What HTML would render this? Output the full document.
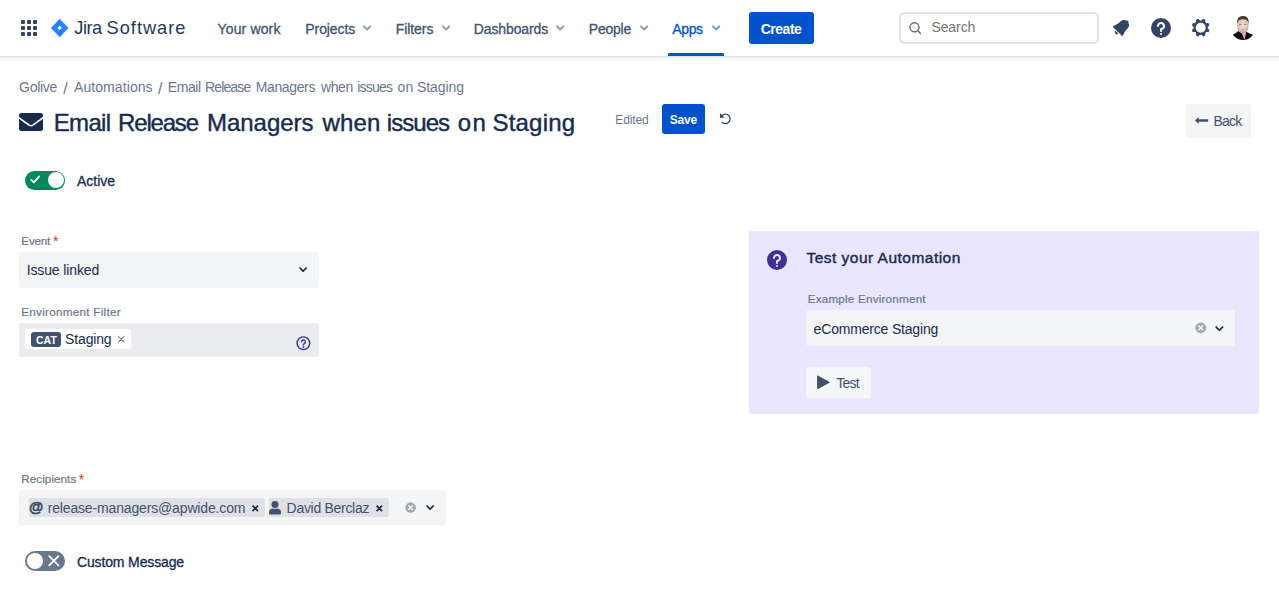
<!DOCTYPE html>
<html lang="en"><head><meta charset="utf-8"><title>Email Release Managers when issues on Staging - Jira</title>
<style>
html,body{margin:0;padding:0;background:#fff;overflow:hidden}
body{width:1279px;height:589px;position:relative;font-family:"Liberation Sans",sans-serif;color:#172b4d}
.t{position:absolute;white-space:pre;line-height:1;font-family:"Liberation Sans",sans-serif}
.b{position:absolute;box-sizing:border-box}
svg{position:absolute;overflow:visible}
.g{margin:0;padding:0;border:0;font-size:0;line-height:0;height:0;display:block;font-weight:normal}

</style></head>
<body>
<!-- header -->
<div class="b" style="left:0;top:0;width:1279px;height:56px;background:#fff"></div>
<div class="b" style="left:0;top:56px;width:1279px;height:4px;background:linear-gradient(180deg,rgba(9,30,66,0.13) 0,rgba(9,30,66,0.13) 1px,rgba(9,30,66,0.08) 1px,rgba(9,30,66,0) 4px)"></div>
<!-- app switcher -->
<svg style="left:17px;top:16px" width="24" height="24" viewBox="0 0 24 24" fill="#344563">
<rect x="4" y="4" width="4" height="4" rx="1"/><rect x="10" y="4" width="4" height="4" rx="1"/><rect x="16" y="4" width="4" height="4" rx="1"/>
<rect x="4" y="10" width="4" height="4" rx="1"/><rect x="10" y="10" width="4" height="4" rx="1"/><rect x="16" y="10" width="4" height="4" rx="1"/>
<rect x="4" y="16" width="4" height="4" rx="1"/><rect x="10" y="16" width="4" height="4" rx="1"/><rect x="16" y="16" width="4" height="4" rx="1"/>
</svg>
<!-- jira diamond -->
<svg style="left:50px;top:18px" width="20" height="20" viewBox="0 0 20 20">
<defs><linearGradient id="jg1" x1="0.75" y1="0.15" x2="0.4" y2="0.75"><stop offset="0" stop-color="#0052cc"/><stop offset="1" stop-color="#2684ff"/></linearGradient>
<linearGradient id="jg2" x1="0.25" y1="0.85" x2="0.6" y2="0.25"><stop offset="0" stop-color="#0052cc"/><stop offset="1" stop-color="#2684ff"/></linearGradient></defs>
<path d="M9.2 1.4 Q9.7 0.9 10.2 1.4 L18.1 9.5 Q18.5 10 18.1 10.5 L10.2 18.6 Q9.7 19.1 9.2 18.6 L1.3 10.5 Q0.9 10 1.3 9.5 Z M9.7 7.6 L7.5 9.95 L9.7 12.3 L11.9 9.95 Z" fill="#2684ff" fill-rule="evenodd"/>
<path d="M9.7 0.95 L9.7 7.6 L7.5 9.95 Q5.6 5.5 9.7 0.95 Z" fill="url(#jg1)" opacity="0.55"/>
<path d="M9.7 19.05 L9.7 12.3 L11.9 9.95 Q13.8 14.5 9.7 19.05 Z" fill="url(#jg2)" opacity="0.55"/>
</svg>
<!-- nav chevrons -->
<svg style="left:363.0px;top:25.4px" width="8.2" height="5.95" viewBox="8 9.6 8 5.8"><path d="M8.292 10.293a1.009 1.009 0 000 1.419l2.939 2.965c.218.215.5.322.779.322s.556-.107.769-.322l2.93-2.955a1.01 1.01 0 000-1.419.987.987 0 00-1.406 0l-2.298 2.317-2.307-2.327a.99.99 0 00-1.406 0z" fill="#42526e" opacity="0.55"/></svg>
<svg style="left:441.5px;top:25.4px" width="8.2" height="5.95" viewBox="8 9.6 8 5.8"><path d="M8.292 10.293a1.009 1.009 0 000 1.419l2.939 2.965c.218.215.5.322.779.322s.556-.107.769-.322l2.93-2.955a1.01 1.01 0 000-1.419.987.987 0 00-1.406 0l-2.298 2.317-2.307-2.327a.99.99 0 00-1.406 0z" fill="#42526e" opacity="0.55"/></svg>
<svg style="left:555.9px;top:25.4px" width="8.2" height="5.95" viewBox="8 9.6 8 5.8"><path d="M8.292 10.293a1.009 1.009 0 000 1.419l2.939 2.965c.218.215.5.322.779.322s.556-.107.769-.322l2.93-2.955a1.01 1.01 0 000-1.419.987.987 0 00-1.406 0l-2.298 2.317-2.307-2.327a.99.99 0 00-1.406 0z" fill="#42526e" opacity="0.55"/></svg>
<svg style="left:639.9px;top:25.4px" width="8.2" height="5.95" viewBox="8 9.6 8 5.8"><path d="M8.292 10.293a1.009 1.009 0 000 1.419l2.939 2.965c.218.215.5.322.779.322s.556-.107.769-.322l2.93-2.955a1.01 1.01 0 000-1.419.987.987 0 00-1.406 0l-2.298 2.317-2.307-2.327a.99.99 0 00-1.406 0z" fill="#42526e" opacity="0.55"/></svg>
<svg style="left:711.9px;top:25.4px" width="8.2" height="5.95" viewBox="8 9.6 8 5.8"><path d="M8.292 10.293a1.009 1.009 0 000 1.419l2.939 2.965c.218.215.5.322.779.322s.556-.107.769-.322l2.93-2.955a1.01 1.01 0 000-1.419.987.987 0 00-1.406 0l-2.298 2.317-2.307-2.327a.99.99 0 00-1.406 0z" fill="#0052cc" opacity="0.55"/></svg>
<!-- apps underline -->
<div class="b" style="left:668px;top:53px;width:56px;height:3px;background:#0052cc;border-radius:1px 1px 0 0"></div>
<!-- create -->
<div class="b" style="left:749px;top:12px;width:65px;height:32px;background:#0052cc;border-radius:3px"></div>
<!-- search -->
<div class="b" style="left:899.3px;top:12px;width:199.5px;height:32.2px;border:2px solid #dfe1e6;border-radius:5.5px;background:#fff"></div>
<svg style="left:909px;top:22px" width="13" height="13" viewBox="0 0 13 13" fill="none" stroke="#5e6c84" stroke-width="1.4" stroke-linecap="round"><circle cx="5.5" cy="5.35" r="4.55"/><path d="M8.9 8.8 L11.5 11.4"/></svg>
<!-- bell -->
<svg style="left:1109px;top:16px" width="24" height="24" viewBox="0 0 24 24"><path d="M6.485 17.669a2 2 0 002.829 0l-2.829-2.83a2 2 0 000 2.83zm4.897-12.191l-.725.725c-.782.782-2.21 1.813-3.206 2.311l-3.017 1.509c-.495.248-.584.774-.187 1.171l8.556 8.556c.398.396.922.313 1.171-.188l1.51-3.016c.494-.988 1.526-2.42 2.311-3.206l.725-.726a5.048 5.048 0 00.64-6.356 1.01 1.01 0 10-1.354-1.494c-.023.025-.046.049-.066.075a5.043 5.043 0 00-2.788-.84 5.036 5.036 0 00-3.57 1.478z" fill="#344563" fill-rule="evenodd"/></svg>
<!-- help -->
<svg style="left:1149px;top:16px" width="24" height="24" viewBox="0 0 24 24"><circle fill="#344563" cx="12" cy="12" r="10"/><circle fill="#fff" cx="12" cy="18" r="1"/><path d="M15.89 9.05a3.975 3.975 0 00-2.957-2.942C10.321 5.514 8.017 7.446 8 9.95l.005.147a.992.992 0 00.982.904c.552 0 1-.447 1.002-.998a2.004 2.004 0 014.007-.002c0 1.102-.898 2-2.003 2H12a1 1 0 00-1 .987v2.014a1.001 1.001 0 002.004 0v-.782c0-.217.145-.399.35-.472A3.99 3.99 0 0015.89 9.05" fill="#fff"/></svg>
<!-- gear -->
<svg style="left:1188.85px;top:15.85px" width="24" height="24" viewBox="0 0 24 24"><path d="M11.701 16.7a5.002 5.002 0 110-10.003 5.002 5.002 0 010 10.004m8.368-3.117a1.995 1.995 0 01-1.346-1.885c0-.876.563-1.613 1.345-1.885a.48.48 0 00.315-.574 8.947 8.947 0 00-.836-1.993.477.477 0 00-.598-.195 2.04 2.04 0 01-1.29.08 1.988 1.988 0 01-1.404-1.395 2.04 2.04 0 01.076-1.297.478.478 0 00-.196-.597 8.98 8.98 0 00-1.975-.826.479.479 0 00-.574.314 1.995 1.995 0 01-1.885 1.346 1.994 1.994 0 01-1.884-1.345.482.482 0 00-.575-.315c-.708.2-1.379.485-2.004.842a.47.47 0 00-.198.582A2.002 2.002 0 014.445 7.06a.478.478 0 00-.595.196 8.946 8.946 0 00-.833 1.994.48.48 0 00.308.572 1.995 1.995 0 011.323 1.877c0 .867-.552 1.599-1.324 1.877a.479.479 0 00-.308.57 8.99 8.99 0 00.723 1.79.477.477 0 00.624.194c.595-.273 1.343-.264 2.104.238.117.077.225.185.302.3.527.8.512 1.58.198 2.188a.473.473 0 00.168.628 8.946 8.946 0 002.11.897.474.474 0 00.57-.313 1.995 1.995 0 011.886-1.353c.878 0 1.618.567 1.887 1.353a.475.475 0 00.57.313 8.964 8.964 0 002.084-.883.473.473 0 00.167-.631c-.318-.608-.337-1.393.191-2.195.077-.116.185-.225.302-.302.772-.511 1.527-.513 2.125-.23a.477.477 0 00.628-.19 8.925 8.925 0 00.728-1.793.478.478 0 00-.314-.573" fill="#344563" fill-rule="evenodd"/></svg>
<!-- avatar -->
<svg style="left:1231px;top:16px" width="24" height="24" viewBox="0 0 24 24"><defs><clipPath id="av"><circle cx="12" cy="12" r="12"/></clipPath>
<radialGradient id="fc" cx="0.5" cy="0.55" r="0.6"><stop offset="0" stop-color="#f0ddd4"/><stop offset="0.6" stop-color="#e3c6b9"/><stop offset="1" stop-color="#b48d7c"/></radialGradient></defs>
<g clip-path="url(#av)"><rect width="24" height="24" fill="#fff"/>
<path d="M2.2 18.6 C4 17.6 5.8 16.6 7.2 15 L11 17.5 L15.3 15.8 C17 17 19.5 17.8 21.6 18.6 L24 24 H0 Z" fill="#0c0c0e"/>
<path d="M9 14 L15.2 14 L15.2 17 L13.4 24 L11.4 18.5 Z" fill="#d9b3a3"/>
<rect x="6.3" y="0" width="11.2" height="16.6" rx="5.2" ry="6" fill="url(#fc)"/>
<path d="M6.1 7.5 C5.6 2 8.5 -0.3 12 -0.3 S18.2 2 17.6 7.5 C17.1 4.6 15.6 3.3 12 3.3 S6.7 4.6 6.1 7.5Z" fill="#4b3c35"/>
<ellipse cx="9.3" cy="8.4" rx="1.3" ry="0.6" fill="#6b5148" opacity="0.6"/><ellipse cx="14.3" cy="8.4" rx="1.3" ry="0.6" fill="#6b5148" opacity="0.6"/>
<ellipse cx="11.8" cy="13.7" rx="1.7" ry="0.7" fill="#c98f8a" opacity="0.8"/>
<path d="M7 12.5 Q11.8 19 16.8 12.5 Q15 16.8 11.8 16.8 T7 12.5Z" fill="#a88576" opacity="0.45"/>
</g></svg>
<!-- title mail icon -->
<svg style="left:19.1px;top:113.2px" width="24" height="18" viewBox="0 64 512 384"><path d="M502.3 190.8c3.9-3.1 9.7-.2 9.7 4.7V400c0 26.5-21.5 48-48 48H48c-26.5 0-48-21.5-48-48V195.6c0-5 5.7-7.8 9.7-4.7 22.4 17.4 52.1 39.5 154.1 113.6 21.1 15.4 56.7 47.8 92.2 47.6 35.7.3 72-32.8 92.3-47.6 102-74.1 131.6-96.3 154-113.7zM256 320c23.2.4 56.6-29.2 73.4-41.4 132.7-96.3 142.8-104.7 173.4-128.7 5.8-4.5 9.2-11.5 9.2-18.9v-19c0-26.5-21.5-48-48-48H48C21.5 64 0 85.5 0 112v19c0 7.4 3.4 14.3 9.2 18.9 30.6 23.9 40.7 32.4 173.4 128.7 16.8 12.2 50.2 41.8 73.4 41.4z" fill="#172b4d"/></svg>
<!-- save -->
<div class="b" style="left:662px;top:104px;width:43px;height:30px;background:#0052cc;border-radius:3px"></div>
<!-- undo icon -->
<svg style="left:719px;top:112px" width="13" height="13" viewBox="0 0 13 13"><path d="M3.0 3.5 A4.75 4.75 0 1 1 3.0 10.2" fill="none" stroke="#344563" stroke-width="1.25" stroke-linecap="round"/><path d="M0.95 1.1 L0.95 5.75 L5.7 5.75 Z" fill="#344563"/></svg>
<!-- back -->
<div class="b" style="left:1186px;top:104px;width:65px;height:34px;background:#f4f5f7;border-radius:3px"></div>
<svg style="left:1195px;top:117.4px" width="13.2" height="7" viewBox="0 0 13.2 7"><path d="M0 3.5 L3.7 0 V2.3 H13.2 V4.7 H3.7 V7 Z" fill="#42526e"/></svg>

<!-- active toggle -->
<div class="b" style="left:25px;top:170.6px;width:40px;height:19.4px;background:#00875a;border-radius:10px"></div>
<div class="b" style="left:47.5px;top:172.3px;width:16px;height:16px;background:#fff;border-radius:50%"></div>
<svg style="left:30.3px;top:175.3px" width="10.5" height="9" viewBox="0 0 10.5 9" fill="none" stroke="#fff" stroke-width="1.8" stroke-linecap="round" stroke-linejoin="round"><path d="M1.2 4.8 L3.8 7.4 L9.3 1.4"/></svg>

<!-- Event select -->
<div class="b" style="left:19.3px;top:252px;width:299.7px;height:35.5px;background:#f4f5f7;border-radius:3px"></div>
<svg style="left:299.2px;top:267.4px" width="8.2" height="5.2" viewBox="0 0 8.2 5.2" fill="none" stroke="#172b4d" stroke-width="1.7" stroke-linecap="round" stroke-linejoin="round"><path d="M1 1 L4.1 4.1 L7.2 1"/></svg>
<!-- Env filter -->
<div class="b" style="left:19.4px;top:323.2px;width:299.6px;height:33.6px;background:#ebecf0;border-radius:3px"></div>
<div class="b" style="left:25px;top:329.4px;width:105.8px;height:19.5px;background:#fff;border-radius:3px"></div>
<div class="b" style="left:31.2px;top:332.2px;width:29.9px;height:14.7px;background:#42526e;border-radius:3px"></div>
<svg style="left:118.3px;top:335.8px" width="6.5" height="6.5" viewBox="0 0 7 7" stroke="#6b778c" stroke-width="1.2" stroke-linecap="round"><path d="M0.6 0.6 L6.4 6.4 M6.4 0.6 L0.6 6.4"/></svg>
<svg style="left:295.5px;top:336px" width="15" height="15" viewBox="0 0 15 15"><circle cx="7.4" cy="7.2" r="6.3" fill="none" stroke="#403294" stroke-width="1.4"/><path d="M5.5 5.9 A1.95 1.95 0 1 1 8.2 7.7 Q7.4 8.1 7.4 8.9" fill="none" stroke="#403294" stroke-width="1.4" stroke-linecap="round"/><circle cx="7.4" cy="10.9" r="0.9" fill="#403294"/></svg>

<!-- Test panel -->
<div class="b" style="left:749.3px;top:231.2px;width:509.5px;height:182.8px;background:#eae6ff;border-radius:3px"></div>
<svg style="left:765.4px;top:247.6px" width="24" height="24" viewBox="0 0 24 24"><circle fill="#403294" cx="12" cy="12" r="10"/><circle fill="#eae6ff" cx="12" cy="18" r="1"/><path d="M15.89 9.05a3.975 3.975 0 00-2.957-2.942C10.321 5.514 8.017 7.446 8 9.95l.005.147a.992.992 0 00.982.904c.552 0 1-.447 1.002-.998a2.004 2.004 0 014.007-.002c0 1.102-.898 2-2.003 2H12a1 1 0 00-1 .987v2.014a1.001 1.001 0 002.004 0v-.782c0-.217.145-.399.35-.472A3.99 3.99 0 0015.89 9.05" fill="#eae6ff"/></svg>
<div class="b" style="left:805.5px;top:310.4px;width:429.6px;height:35.4px;background:#f4f5f7;border-radius:3px"></div>
<svg style="left:1194.8px;top:322.4px" width="11.6" height="11.6" viewBox="0 0 12 12"><circle cx="6" cy="6" r="5.6" fill="#a0a8b6"/><path d="M4 4 L8 8 M8 4 L4 8" stroke="#f4f5f7" stroke-width="1.5" stroke-linecap="round"/></svg>
<svg style="left:1215.2px;top:326px" width="8.8" height="5.4" viewBox="0 0 8.2 5.2" fill="none" stroke="#172b4d" stroke-width="1.7" stroke-linecap="round" stroke-linejoin="round"><path d="M1 1 L4.1 4.1 L7.2 1"/></svg>
<div class="b" style="left:805.5px;top:366.5px;width:65.9px;height:31.8px;background:#f5f6f8;border-radius:3.5px"></div>
<svg style="left:817px;top:375.4px" width="13" height="14.6" viewBox="0 0 13 14.6"><path d="M0.6 0.9 L12.4 7.3 L0.6 13.7 Z" fill="#42526e" stroke="#42526e" stroke-width="1" stroke-linejoin="round"/></svg>

<!-- Recipients -->
<div class="b" style="left:19.2px;top:490px;width:426.7px;height:35.3px;background:#f4f5f7;border-radius:3px"></div>
<div class="b" style="left:29.1px;top:498px;width:235.5px;height:18.8px;background:#dfe1e6;border-radius:1px 3px 3px 1px"></div>
<div class="b" style="left:268.8px;top:498px;width:120px;height:18.8px;background:#dfe1e6;border-radius:1px 3px 3px 1px"></div>
<svg style="left:269.3px;top:501.4px" width="12" height="13.6" viewBox="0 0 12 13.6" fill="#42526e"><circle cx="6" cy="3.5" r="3.5"/><path d="M0 12.3 V11.3 A3.6 3.6 0 0 1 3.6 7.7 H8.4 A3.6 3.6 0 0 1 12 11.3 V12.3 A1.3 1.3 0 0 1 10.7 13.6 H1.3 A1.3 1.3 0 0 1 0 12.3 Z"/></svg>
<svg style="left:251.6px;top:504.5px" width="6.6" height="6.6" viewBox="0 0 7 7" stroke="#172b4d" stroke-width="1.8" stroke-linecap="butt"><path d="M0.6 0.6 L6.4 6.4 M6.4 0.6 L0.6 6.4"/></svg>
<svg style="left:375.5px;top:504.5px" width="6.6" height="6.6" viewBox="0 0 7 7" stroke="#172b4d" stroke-width="1.8" stroke-linecap="butt"><path d="M0.6 0.6 L6.4 6.4 M6.4 0.6 L0.6 6.4"/></svg>
<svg style="left:405.1px;top:502.1px" width="11.2" height="11.2" viewBox="0 0 12 12"><circle cx="6" cy="6" r="5.6" fill="#a0a8b6"/><path d="M4 4 L8 8 M8 4 L4 8" stroke="#f4f5f7" stroke-width="1.5" stroke-linecap="round"/></svg>
<svg style="left:426.2px;top:505px" width="8.2" height="5.2" viewBox="0 0 8.2 5.2" fill="none" stroke="#172b4d" stroke-width="1.7" stroke-linecap="round" stroke-linejoin="round"><path d="M1 1 L4.1 4.1 L7.2 1"/></svg>

<!-- custom message toggle -->
<div class="b" style="left:25px;top:551.4px;width:39.6px;height:19.4px;background:#6b778c;border-radius:10px"></div>
<div class="b" style="left:26.8px;top:553.1px;width:16px;height:16px;background:#fff;border-radius:50%"></div>
<svg style="left:47.5px;top:555.3px" width="11.6" height="11.6" viewBox="0 0 11.6 11.6" stroke="#fff" stroke-width="1.8" stroke-linecap="round"><path d="M1.2 1.2 L10.4 10.4 M10.4 1.2 L1.2 10.4"/></svg>

<div class="g"><span class="t" style="left:74.25px;top:19px;font-size:18.2px;font-weight:400;color:#253858;letter-spacing:-0.447px;">Jira</span> <span class="t" style="left:106.55px;top:19px;font-size:18.2px;font-weight:400;color:#253858;letter-spacing:1.016px;">Software</span></div>
<nav class="g"><span class="t" style="left:217.62px;top:22px;font-size:14px;font-weight:400;color:#42526e;letter-spacing:0.129px;-webkit-text-stroke:0.3px #42526e;">Your work</span> <span class="t" style="left:305.35px;top:22px;font-size:14px;font-weight:400;color:#42526e;letter-spacing:-0.095px;-webkit-text-stroke:0.3px #42526e;">Projects</span> <span class="t" style="left:395.65px;top:22px;font-size:14px;font-weight:400;color:#42526e;letter-spacing:-0.061px;-webkit-text-stroke:0.3px #42526e;">Filters</span> <span class="t" style="left:473.85px;top:22px;font-size:14px;font-weight:400;color:#42526e;letter-spacing:-0.129px;-webkit-text-stroke:0.3px #42526e;">Dashboards</span> <span class="t" style="left:588.85px;top:22px;font-size:14px;font-weight:400;color:#42526e;letter-spacing:-0.248px;-webkit-text-stroke:0.3px #42526e;">People</span> <span class="t" style="left:672.35px;top:22px;font-size:14px;font-weight:400;color:#0052cc;letter-spacing:-0.388px;-webkit-text-stroke:0.3px #0052cc;">Apps</span></nav>
<span class="t" style="left:760.72px;top:22px;font-size:14px;font-weight:700;color:#ffffff;letter-spacing:-0.491px;">Create</span>
<span class="t" style="left:931.42px;top:20px;font-size:14px;font-weight:400;color:#757575;letter-spacing:-0.078px;">Search</span>
<div class="g"><span class="t" style="left:19.09px;top:80px;font-size:14px;font-weight:400;color:#6b778c;letter-spacing:-0.303px;">Golive</span> <span class="t" style="left:63.31px;top:81px;font-size:16px;font-weight:400;color:#6b778c;letter-spacing:0.000px;">/</span> <span class="t" style="left:74.02px;top:80px;font-size:14px;font-weight:400;color:#6b778c;letter-spacing:0.077px;">Automations</span> <span class="t" style="left:158.01px;top:81px;font-size:16px;font-weight:400;color:#6b778c;letter-spacing:0.000px;">/</span> <span class="t" style="left:167.71px;top:80px;font-size:14px;font-weight:400;color:#6b778c;letter-spacing:-0.396px;">Email</span> <span class="t" style="left:204.91px;top:80px;font-size:14px;font-weight:400;color:#6b778c;letter-spacing:-0.832px;">Release</span> <span class="t" style="left:255.71px;top:80px;font-size:14px;font-weight:400;color:#6b778c;letter-spacing:-0.365px;">Managers</span> <span class="t" style="left:321.01px;top:80px;font-size:14px;font-weight:400;color:#6b778c;letter-spacing:-0.430px;">when</span> <span class="t" style="left:357.15px;top:80px;font-size:14px;font-weight:400;color:#6b778c;letter-spacing:-0.772px;">issues</span> <span class="t" style="left:397.62px;top:80px;font-size:14px;font-weight:400;color:#6b778c;letter-spacing:0.205px;">on</span> <span class="t" style="left:417.11px;top:80px;font-size:14px;font-weight:400;color:#6b778c;letter-spacing:-0.110px;">Staging</span></div>
<h1 class="g"><span class="t" style="left:53.81px;top:111px;font-size:24px;font-weight:400;color:#172b4d;letter-spacing:-0.691px;-webkit-text-stroke:0.4px #172b4d;">Email</span> <span class="t" style="left:118.11px;top:111px;font-size:24px;font-weight:400;color:#172b4d;letter-spacing:-1.198px;-webkit-text-stroke:0.4px #172b4d;">Release</span> <span class="t" style="left:206.90px;top:111px;font-size:24px;font-weight:400;color:#172b4d;letter-spacing:-0.001px;-webkit-text-stroke:0.4px #172b4d;">Managers</span> <span class="t" style="left:322.39px;top:111px;font-size:24px;font-weight:400;color:#172b4d;letter-spacing:0.217px;-webkit-text-stroke:0.4px #172b4d;">when</span> <span class="t" style="left:386.80px;top:111px;font-size:24px;font-weight:400;color:#172b4d;letter-spacing:-0.951px;-webkit-text-stroke:0.4px #172b4d;">issues</span> <span class="t" style="left:457.84px;top:111px;font-size:24px;font-weight:400;color:#172b4d;letter-spacing:1.270px;-webkit-text-stroke:0.4px #172b4d;">on</span> <span class="t" style="left:492.47px;top:111px;font-size:24px;font-weight:400;color:#172b4d;letter-spacing:0.199px;-webkit-text-stroke:0.4px #172b4d;">Staging</span></h1>
<span class="t" style="left:615.35px;top:114px;font-size:12px;font-weight:400;color:#6b778c;letter-spacing:-0.115px;">Edited</span>
<span class="t" style="left:669.81px;top:114px;font-size:12px;font-weight:700;color:#ffffff;letter-spacing:-0.197px;">Save</span>
<span class="t" style="left:1213.41px;top:114px;font-size:14px;font-weight:400;color:#42526e;letter-spacing:-0.798px;">Back</span>
<span class="t" style="left:77.05px;top:174px;font-size:14px;font-weight:400;color:#172b4d;letter-spacing:-0.014px;-webkit-text-stroke:0.3px #172b4d;">Active</span>
<label class="g"><span class="t" style="left:21.30px;top:235px;font-size:11.7px;font-weight:400;color:#6b778c;letter-spacing:-0.205px;-webkit-text-stroke:0.2px #6b778c;">Event</span> <span class="t" style="left:53.11px;top:234px;font-size:14px;font-weight:400;color:#de350b;letter-spacing:0.000px;">*</span></label>
<span class="t" style="left:26.66px;top:263px;font-size:14px;font-weight:400;color:#172b4d;letter-spacing:-0.126px;">Issue linked</span>
<span class="t" style="left:21.30px;top:306px;font-size:11.7px;font-weight:400;color:#6b778c;letter-spacing:0.266px;-webkit-text-stroke:0.2px #6b778c;">Environment Filter</span>
<span class="t" style="left:35.99px;top:335px;font-size:10.5px;font-weight:700;color:#ffffff;letter-spacing:0.005px;">CAT</span>
<span class="t" style="left:65.12px;top:332px;font-size:14px;font-weight:400;color:#172b4d;letter-spacing:-0.160px;">Staging</span>
<span class="t" style="left:806.43px;top:250px;font-size:15.5px;font-weight:400;color:#172b4d;letter-spacing:0.483px;-webkit-text-stroke:0.4px #172b4d;">Test your Automation</span>
<span class="t" style="left:807.70px;top:293px;font-size:11.7px;font-weight:400;color:#6b778c;letter-spacing:0.198px;-webkit-text-stroke:0.2px #6b778c;">Example Environment</span>
<span class="t" style="left:813.62px;top:322px;font-size:14px;font-weight:400;color:#172b4d;letter-spacing:-0.185px;">eCommerce Staging</span>
<span class="t" style="left:836.27px;top:376px;font-size:14px;font-weight:400;color:#42526e;letter-spacing:-0.783px;">Test</span>
<label class="g"><span class="t" style="left:21.30px;top:473px;font-size:11.7px;font-weight:400;color:#6b778c;letter-spacing:0.043px;-webkit-text-stroke:0.2px #6b778c;">Recipients</span> <span class="t" style="left:78.81px;top:472px;font-size:14px;font-weight:400;color:#de350b;letter-spacing:0.000px;">*</span></label>
<span class="t" style="left:29.07px;top:500px;font-size:14.6px;font-weight:700;color:#344563;letter-spacing:0.000px;-webkit-text-stroke:0.5px #344563;">@</span>
<span class="t" style="left:47.65px;top:501px;font-size:14px;font-weight:400;color:#42526e;letter-spacing:-0.151px;">release-managers@apwide.com</span>
<span class="t" style="left:286.61px;top:501px;font-size:14px;font-weight:400;color:#42526e;letter-spacing:-0.299px;">David Berclaz</span>
<span class="t" style="left:76.95px;top:555px;font-size:14px;font-weight:400;color:#172b4d;letter-spacing:-0.136px;-webkit-text-stroke:0.3px #172b4d;">Custom Message</span>
</body></html>
